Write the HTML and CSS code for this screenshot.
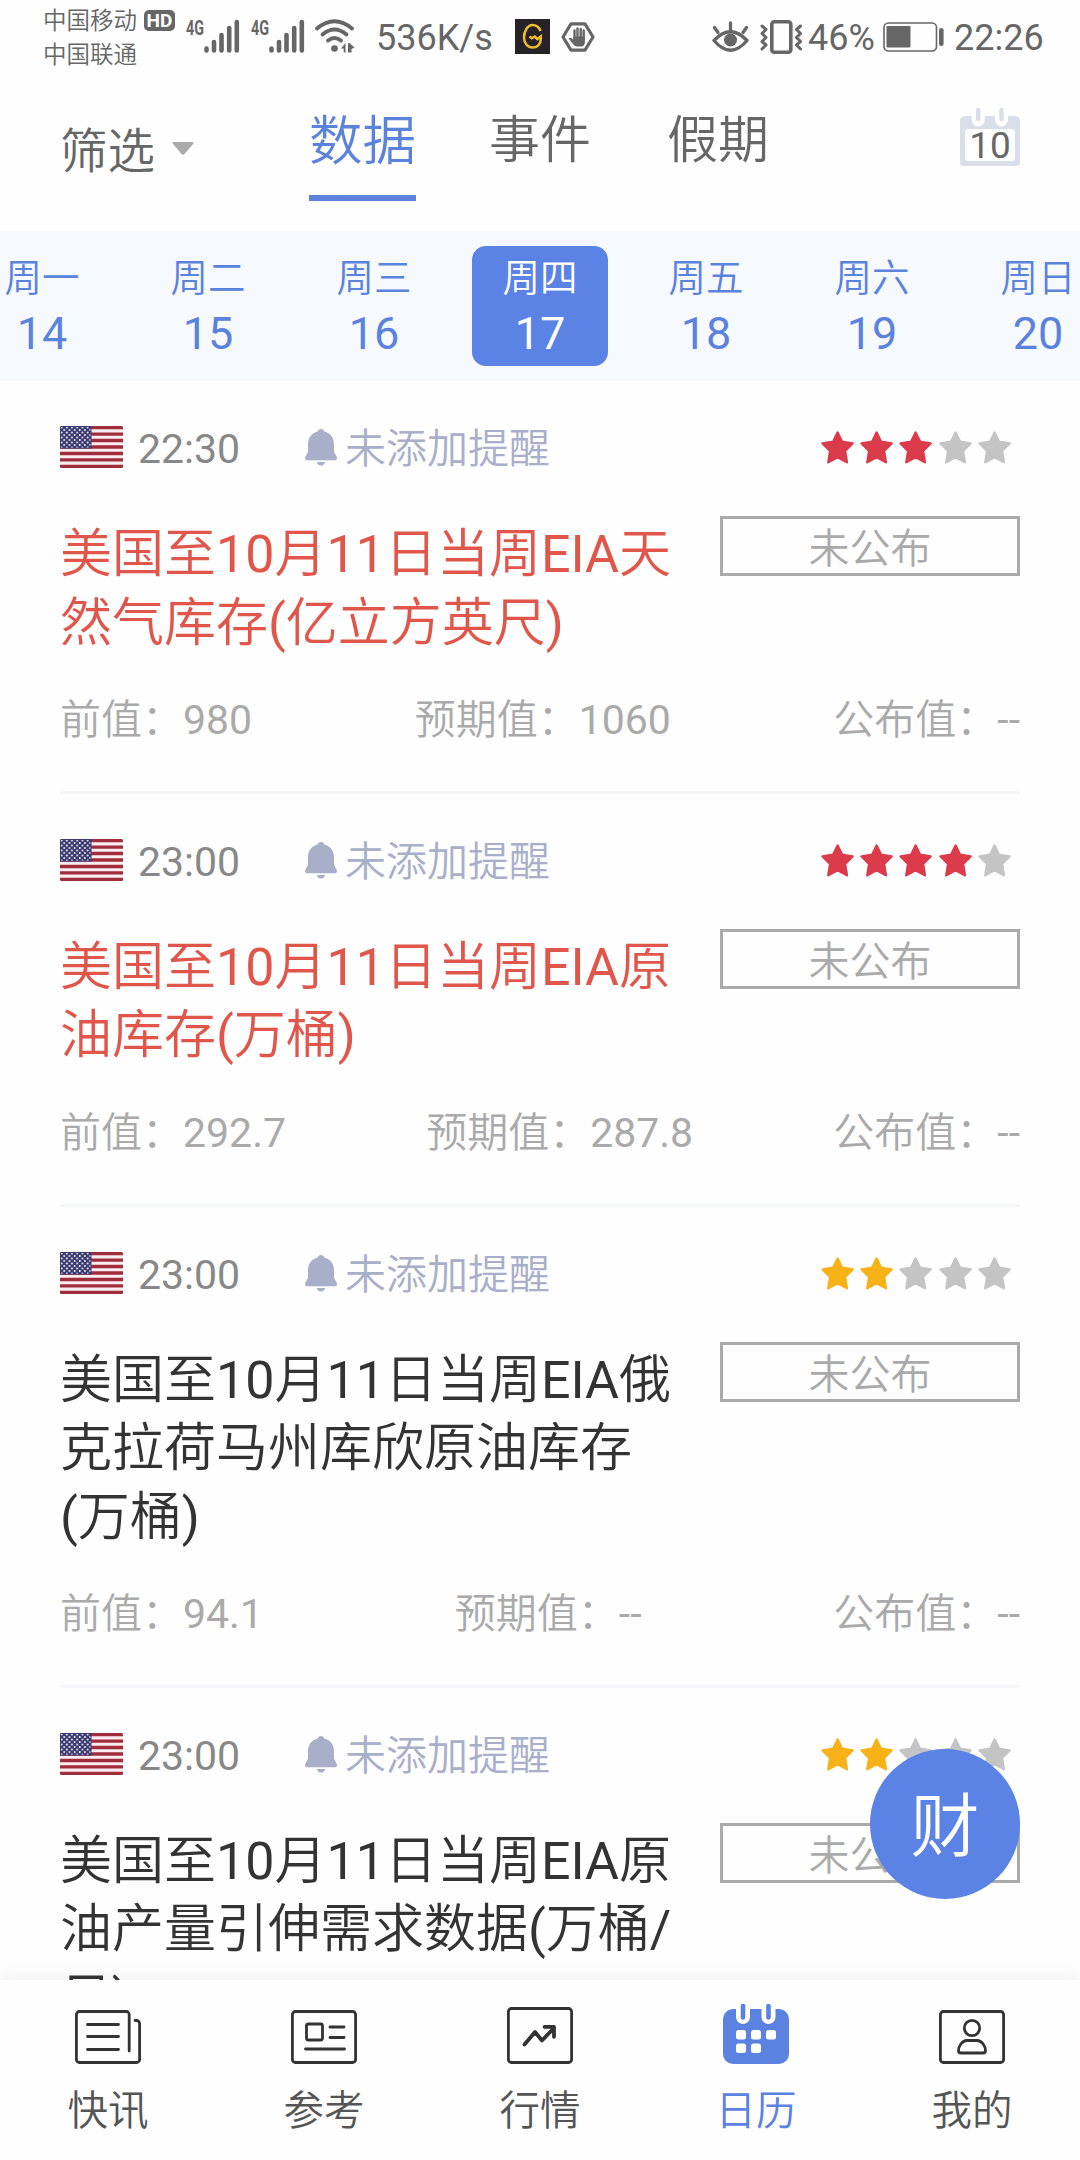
FILE: index.html
```html
<!DOCTYPE html>
<html lang="zh-CN">
<head>
  <meta charset="UTF-8" />
  <meta name="viewport" content="width=device-width, initial-scale=1" />
  <title>财经日历</title>
  <link rel="stylesheet" href="styles.css">
</head>
<body>

  <!-- 图标定义 -->
  <svg class="defs" width="0" height="0">
    <defs>
      <pattern id="dots" width="5.2" height="5" patternUnits="userSpaceOnUse">
        <circle cx="1.6" cy="1.5" r="0.9" fill="#fff"/>
        <circle cx="4.2" cy="4" r="0.9" fill="#fff"/>
      </pattern>
      <clipPath id="flag-clip"><rect width="63" height="42" rx="1.5"/></clipPath>
    </defs>
    <symbol id="flag" viewBox="0 0 63 42">
      <g clip-path="url(#flag-clip)">
        <rect width="63" height="42" fill="#fbeef1"/>
        <path d="M0 1.6h63M0 8.1h63M0 14.5h63M0 21h63M0 27.5h63M0 33.9h63M0 40.4h63" stroke="#a12c3c" stroke-width="3.3"/>
        <rect width="31.5" height="22.6" fill="#3b3a72"/>
        <rect x="1" y="1" width="29.5" height="20.6" fill="url(#dots)"/>
      </g>
    </symbol>
    <symbol id="bell" viewBox="0 0 32 37">
      <path d="M16 0c2 0 3 1.200 3.300 2.500C25.500 4 29 9 29 15v7.500c0 1.500 3 4 3 6.500 0 1.500-1 2.300-2.500 2.300h-27C1 31.300 0 30.500 0 29c0-2.500 3-5 3-6.500V15C3 9 6.500 4 12.700 2.500 13 1.200 14 0 16 0z"/>
      <path d="M11.800 33h8.400c-.6 2.300-2.200 3.600-4.200 3.600s-3.600-1.300-4.200-3.600z"/>
    </symbol>
    <symbol id="star" viewBox="0 0 33 33">
      <path d="M16.500 1.500L21 10.800 31.500 12.400 24 20 25.800 31.300 16.500 26.200 7.200 31.300 9 20 1.500 12.400 12 10.800z" stroke="currentColor" stroke-width="2.400" stroke-linejoin="round"/>
    </symbol>
    <symbol id="signal" viewBox="0 0 54 34">
      <text x="0" y="15.500" font-size="20" font-weight="700" textLength="18" lengthAdjust="spacingAndGlyphs">4G</text>
      <path d="M20.500 29.500v2M28 23v8.500M35.500 16v15.500M43.200 9v22.500M50.800 3v28.500" stroke="currentColor" stroke-width="4.600" stroke-linecap="round"/>
    </symbol>
  </svg>

  <!-- 状态栏 -->
  <div class="status-bar">
    <div class="carriers">
      <div>中国移动</div>
      <div>中国联通</div>
    </div>
    <span class="hd">HD</span>
    <svg class="signal" width="54" height="34"><use href="#signal"/></svg>
    <svg class="signal second" width="54" height="34"><use href="#signal"/></svg>
    <svg class="wifi" width="40" height="34" viewBox="0 0 40 34">
      <g fill="none" stroke="currentColor" stroke-width="3.800" stroke-linecap="round">
        <path d="M2 9.500Q19.500-5 37 9.500"/>
        <path d="M7.500 15.500Q19.500 5.500 31.500 15.500"/>
        <path d="M13 21.500Q19.500 16.500 26 21.500"/>
      </g>
      <circle cx="19.500" cy="29.500" r="3.300"/>
      <path d="M26 29.500l4.500-5.500v9.500h-1.800v-4zM33 24h1.500l5 4.500-3 1.500v3.500H33z"/>
    </svg>
    <span class="speed">536K/s</span>
    <svg class="app-icon" width="35" height="35" viewBox="0 0 35 35">
      <rect width="35" height="35" fill="#252326"/>
      <path d="M25.500 12C24 8 21 6 17.500 6 12.500 6 9 12.500 9 18.500c0 6 4 10 8.500 10s8.300-3 8.300-8.500v-2.500l-3.500 2.500-2.500-2.500-3 1.800-2.300-1.800" fill="none" stroke="#eebd2e" stroke-width="2.500"/>
    </svg>
    <svg class="hand" width="34" height="30" viewBox="0 0 34 30">
      <path d="M10 1.800h14L32 15 24 28.200H10L2 15z" fill="none" stroke="currentColor" stroke-width="3.200" stroke-linejoin="round"/>
      <path d="M13.500 16V8.500M16.500 15V6.500M19.700 15V7M22.700 16V8.500" stroke="currentColor" stroke-width="2.400" stroke-linecap="round"/>
      <path d="M12.300 14.500h11.600V20c0 2.500-1.500 4.500-3.500 4.500h-4.200c-2 0-3.200-1-4.200-2.500l-4.500-5.500c1-1.500 2.800-.8 4.800 1z"/>
    </svg>
    <svg class="eye" width="37" height="32" viewBox="0 0 37 32">
      <g fill="none" stroke="currentColor" stroke-width="3.300" stroke-linecap="round">
        <path d="M2 19.500Q18.500 2 35 19.500Q18.500 39 2 19.500z" stroke-linejoin="round"/>
        <path d="M18.500 9V2M6 11.500L2.500 6.500M31 11.500l3.500-5"/>
      </g>
      <circle cx="18.500" cy="19" r="6.500"/>
    </svg>
    <svg class="vibrate" width="42" height="34" viewBox="0 0 42 34">
      <g fill="none" stroke="currentColor" stroke-linejoin="round" stroke-linecap="round">
        <rect x="11.800" y="1.800" width="19" height="30.400" rx="2.500" stroke-width="3.600"/>
        <path d="M2 6l4 3.500-4 4 4 4-4 4 4 3.500-4 4M40.500 6l-4 3.500 4 4-4 4 4 4-4 3.500 4 4" stroke-width="3"/>
      </g>
    </svg>
    <span class="percent">46%</span>
    <svg class="battery" width="62" height="30" viewBox="0 0 62 30">
      <rect x="1" y="1" width="52.500" height="28" rx="4.500" fill="none" stroke="currentColor" stroke-width="1.600"/>
      <rect x="3.500" y="4" width="24" height="21.500" rx="1"/>
      <rect x="56" y="6" width="4.600" height="18" rx="2.200"/>
    </svg>
    <span class="clock">22:26</span>
  </div>

  <!-- 顶部导航 -->
  <div class="header">
    <div class="filter">筛选
      <svg width="22" height="13" viewBox="0 0 22 13"><path d="M1.500 0h19c1.200 0 1.500 1 .8 1.800l-9 10.400c-.7.800-1.800.8-2.500 0L.8 1.800C0 1 .3 0 1.500 0z"/></svg>
    </div>
    <div class="tab active">数据</div>
    <div class="tab">事件</div>
    <div class="tab">假期</div>
    <div class="cal-btn">
      <svg width="60" height="60" viewBox="0 0 60 60">
        <path d="M5 9h50a5 5 0 0 1 5 5v41a4 4 0 0 1-4 4H4a4 4 0 0 1-4-4V14a5 5 0 0 1 5-5z" fill="#dadee8"/>
        <rect x="5" y="22" width="50" height="32" rx="3" fill="#fff"/>
        <path d="M18.200 6v7M41.500 6v7" stroke="#fff" stroke-width="13" stroke-linecap="round"/>
        <path d="M18.200 3v9M41.500 3v9" stroke="#dadee8" stroke-width="4.500" stroke-linecap="round"/>
      </svg>
      <span>10</span>
    </div>
  </div>

  <!-- 日期 -->
  <div class="week">
    <div class="day"><span>周一</span><b>14</b></div>
    <div class="day"><span>周二</span><b>15</b></div>
    <div class="day"><span>周三</span><b>16</b></div>
    <div class="day active"><span>周四</span><b>17</b></div>
    <div class="day"><span>周五</span><b>18</b></div>
    <div class="day"><span>周六</span><b>19</b></div>
    <div class="day"><span>周日</span><b>20</b></div>
  </div>

  <!-- 数据列表 -->
  <div class="list">
    <div class="item hot">
      <div class="meta">
        <svg class="flag"><use href="#flag"/></svg>
        <span class="time">22:30</span>
        <svg class="bell"><use href="#bell"/></svg>
        <span class="remind">未添加提醒</span>
        <div class="stars red">
          <svg class="on"><use href="#star"/></svg>
          <svg class="on"><use href="#star"/></svg>
          <svg class="on"><use href="#star"/></svg>
          <svg><use href="#star"/></svg>
          <svg><use href="#star"/></svg>
        </div>
      </div>
      <div class="main">
        <div class="title">美国至10月11日当周EIA天<br>然气库存(亿立方英尺)</div>
        <div class="state">未公布</div>
      </div>
      <div class="values"><span>前值：980</span><span>预期值：1060</span><span>公布值：--</span></div>
    </div>

    <div class="item hot">
      <div class="meta">
        <svg class="flag"><use href="#flag"/></svg>
        <span class="time">23:00</span>
        <svg class="bell"><use href="#bell"/></svg>
        <span class="remind">未添加提醒</span>
        <div class="stars red">
          <svg class="on"><use href="#star"/></svg>
          <svg class="on"><use href="#star"/></svg>
          <svg class="on"><use href="#star"/></svg>
          <svg class="on"><use href="#star"/></svg>
          <svg><use href="#star"/></svg>
        </div>
      </div>
      <div class="main">
        <div class="title">美国至10月11日当周EIA原<br>油库存(万桶)</div>
        <div class="state">未公布</div>
      </div>
      <div class="values"><span>前值：292.7</span><span>预期值：287.8</span><span>公布值：--</span></div>
    </div>

    <div class="item">
      <div class="meta">
        <svg class="flag"><use href="#flag"/></svg>
        <span class="time">23:00</span>
        <svg class="bell"><use href="#bell"/></svg>
        <span class="remind">未添加提醒</span>
        <div class="stars">
          <svg class="on"><use href="#star"/></svg>
          <svg class="on"><use href="#star"/></svg>
          <svg><use href="#star"/></svg>
          <svg><use href="#star"/></svg>
          <svg><use href="#star"/></svg>
        </div>
      </div>
      <div class="main">
        <div class="title">美国至10月11日当周EIA俄<br>克拉荷马州库欣原油库存<br>(万桶)</div>
        <div class="state">未公布</div>
      </div>
      <div class="values"><span>前值：94.1</span><span>预期值：--</span><span>公布值：--</span></div>
    </div>

    <div class="item">
      <div class="meta">
        <svg class="flag"><use href="#flag"/></svg>
        <span class="time">23:00</span>
        <svg class="bell"><use href="#bell"/></svg>
        <span class="remind">未添加提醒</span>
        <div class="stars">
          <svg class="on"><use href="#star"/></svg>
          <svg class="on"><use href="#star"/></svg>
          <svg><use href="#star"/></svg>
          <svg><use href="#star"/></svg>
          <svg><use href="#star"/></svg>
        </div>
      </div>
      <div class="main">
        <div class="title">美国至10月11日当周EIA原<br>油产量引伸需求数据(万桶/<br>日)</div>
        <div class="state">未公布</div>
      </div>
    </div>
  </div>

  <!-- 悬浮按钮 -->
  <div class="fab">财</div>

  <!-- 底部导航 -->
  <div class="tabbar">
    <div class="nav">
      <svg width="66" height="60" viewBox="0 0 66 60">
        <g fill="none" stroke="currentColor" stroke-width="2.800" stroke-linecap="round">
          <path d="M54.200 47V10.500a3 3 0 0 0-3-3H4.400a3 3 0 0 0-3 3v45a3 3 0 0 0 3 3h57.200a3 3 0 0 0 3-3V19.500a3 3 0 0 0-3-3h-1.500"/>
          <path d="M12.500 20.500h31M12.500 32.500h31M12.500 45.500h31"/>
        </g>
      </svg>
      <span>快讯</span>
    </div>
    <div class="nav">
      <svg width="66" height="60" viewBox="0 0 66 60">
        <g fill="none" stroke="currentColor" stroke-width="2.800" stroke-linecap="round">
          <rect x="1.400" y="7.500" width="63.200" height="51" rx="3"/>
          <rect x="15.500" y="20" width="16" height="16" rx="2"/>
          <path d="M39 23h14M39 33.500h14M14.500 45h39"/>
        </g>
      </svg>
      <span>参考</span>
    </div>
    <div class="nav">
      <svg width="66" height="60" viewBox="0 0 66 60">
        <g fill="none" stroke="currentColor" stroke-linecap="round" stroke-linejoin="round">
          <rect x="1.400" y="4.500" width="63.200" height="54" rx="3" stroke-width="2.800"/>
          <path d="M17.500 40.500L28 28l7 8.500L47 24M37.500 22.800H47v10" stroke-width="3.800"/>
        </g>
      </svg>
      <span>行情</span>
    </div>
    <div class="nav active">
      <svg width="66" height="60" viewBox="0 0 66 60">
        <rect y="5" width="66" height="55" rx="10" fill="currentColor"/>
        <path d="M20 3v10M45.500 3v10" stroke="#fff" stroke-width="14" stroke-linecap="round"/>
        <path d="M20 2v11.500M45.500 2v11.500" stroke="currentColor" stroke-width="4.600" stroke-linecap="round"/>
        <g fill="#fff">
          <rect x="13" y="26" width="10" height="9.500" rx="2.500"/>
          <rect x="28" y="26" width="10" height="9.500" rx="2.500"/>
          <rect x="43" y="26" width="10" height="9.500" rx="2.500"/>
          <rect x="13" y="39.500" width="10" height="9.500" rx="2.500"/>
          <rect x="28" y="39.500" width="10" height="9.500" rx="2.500"/>
        </g>
      </svg>
      <span>日历</span>
    </div>
    <div class="nav">
      <svg width="66" height="60" viewBox="0 0 66 60">
        <g fill="none" stroke="currentColor" stroke-width="2.800">
          <rect x="1.400" y="7.500" width="63.200" height="51" rx="3"/>
          <circle cx="33" cy="24" r="7.700"/>
          <path d="M28 36.500h10c5 0 8.500 6 8.500 10 0 1.500-1 2.500-2.500 2.500H22c-1.500 0-2.500-1-2.500-2.500 0-4 3.500-10 8.500-10z"/>
        </g>
      </svg>
      <span>我的</span>
    </div>
  </div>

</body>
</html>
```
FILE: styles.css
```css
* {
  box-sizing: border-box;
}
body {
  margin: 0;
  width: 1080px;
  height: 2160px;
  display: flex;
  flex-direction: column;
  overflow: hidden;
  background: #fefefe;
  color: #666;
  font-family: Roboto, "Noto Sans CJK SC DemiLight", "Noto Sans CJK SC", sans-serif;
  font-weight: 400;
}
svg {
  display: block;
  flex: none;
  fill: currentColor;
}
.defs {
  position: absolute;
}

/* 状态栏 */
.status-bar {
  display: flex;
  height: 75px;
  padding: 0 35px 0 43px;
  font-size: 36px;
  line-height: 76px;
  white-space: nowrap;
}
.carriers {
  width: 101px;
  padding-top: 4px;
  font-size: 23.5px;
  line-height: 34px;
}
.hd {
  width: 31px;
  height: 21px;
  margin-top: 10px;
  border-radius: 5px;
  background: #666;
  color: #fff;
  font-size: 19px;
  line-height: 21px;
  font-weight: 700;
  text-align: center;
}
.signal {
  margin: 19px 0 0 11px;
}
.second {
  margin-left: 11px;
}
.wifi {
  margin: 19px 0 0 10px;
}
.speed {
  width: 116px;
  margin-left: 21px;
}
.app-icon {
  margin: 19px 0 0 23px;
}
.hand {
  margin: 22px 0 0 11px;
}
.eye {
  margin: 21px 0 0 117px;
}
.vibrate {
  margin: 20px 0 0 11px;
}
.percent {
  width: 66px;
  margin-left: 6px;
}
.battery {
  margin: 22px 0 0 9px;
}
.clock {
  margin-left: 9px;
}

/* 顶部导航 */
.header {
  display: flex;
  height: 156px;
  padding: 0 60px;
}
.filter {
  display: flex;
  width: 249px;
  font-size: 47.5px;
  line-height: 70px;
  padding-top: 42px;
}
.filter svg {
  margin: 25px 0 0 17px;
  color: #aaa;
}
.tab {
  height: 126px;
  margin-right: 76px;
  padding-top: 30px;
  font-size: 51px;
  line-height: 72px;
}
.tab.active {
  margin-right: 73px;
  padding-top: 31px;
  border-bottom: 6px solid #5b82dc;
  color: #5b82dc;
  font-size: 53.5px;
}
.cal-btn {
  position: relative;
  width: 60px;
  height: 60px;
  margin: 32px 0 0 auto;
}
.cal-btn span {
  position: absolute;
  left: 0;
  top: 23px;
  width: 60px;
  font-size: 37px;
  line-height: 32px;
  text-align: center;
}

/* 日期 */
.week {
  display: flex;
  flex: none;
  justify-content: center;
  gap: 30px;
  height: 150px;
  margin: 0 -41px;
  padding: 15px 0;
  background: #f6faff;
}
.day {
  flex: none;
  width: 136px;
  height: 120px;
  padding-top: 9px;
  border-radius: 14px;
  color: #5b82dc;
  text-align: center;
}
.day.active {
  background: #5b82e5;
  color: #fff;
}
.day span,
.day b {
  display: block;
  height: 46px;
  font-size: 37.5px;
  line-height: 46px;
}
.day b {
  height: 60px;
  font-size: 45px;
  line-height: 66px;
  font-weight: 400;
}

/* 列表 */
.list {
  flex: 1;
  min-height: 0;
  overflow: hidden;
  padding: 0 60px;
}
.item {
  padding-top: 45px;
  border-bottom: 3px solid #f5f6f7;
}
.meta {
  display: flex;
  height: 42px;
  font-size: 41px;
  line-height: 47px;
}
.flag {
  width: 63px;
  height: 42px;
}
.time {
  width: 167px;
  padding-left: 15px;
  color: #888;
}
.bell {
  width: 32px;
  height: 37px;
  margin: 3px 8px 0 15px;
  color: #a9afc8;
}
.remind {
  color: #a9afc8;
}
.stars {
  display: flex;
  gap: 6px;
  margin: 5px 9px 0 auto;
  color: #c4c4c4;
}
.stars svg {
  width: 33.2px;
  height: 33px;
}
.stars .on {
  color: #f7b217;
}
.stars.red .on {
  color: #db3b4b;
}
.main {
  display: flex;
  justify-content: space-between;
  padding-top: 48px;
}
.title {
  padding-top: 5px;
  color: #333;
  font-size: 52px;
  line-height: 68.5px;
  white-space: nowrap;
}
.hot .title {
  color: #e1564b;
}
.state {
  width: 300px;
  height: 60px;
  border: 3px solid #aaa;
  color: #aaa;
  font-size: 41px;
  line-height: 60px;
  text-align: center;
}
.values {
  display: flex;
  justify-content: space-between;
  height: 132.8px;
  padding-top: 39px;
  color: #aaa;
  font-size: 41px;
  line-height: 47px;
}

/* 悬浮按钮 */
.fab {
  position: absolute;
  left: 870px;
  top: 1749px;
  width: 150px;
  height: 150px;
  border-radius: 50%;
  background: #5b82e5;
  color: #fff;
  font-size: 69px;
  line-height: 158px;
  text-align: center;
}

/* 底部导航 */
.tabbar {
  position: relative;
  display: flex;
  flex: none;
  height: 180px;
  background: #fefefe;
  box-shadow: 0 0 20px rgba(0, 0, 0, 0.08);
}
.nav {
  display: flex;
  flex: 1;
  flex-direction: column;
  align-items: center;
  padding-top: 24px;
  color: #333;
}
.nav span {
  margin-top: 17px;
  color: #555;
  font-size: 40.5px;
  line-height: 60px;
}
.nav.active,
.nav.active span {
  color: #5b82e0;
}
```
